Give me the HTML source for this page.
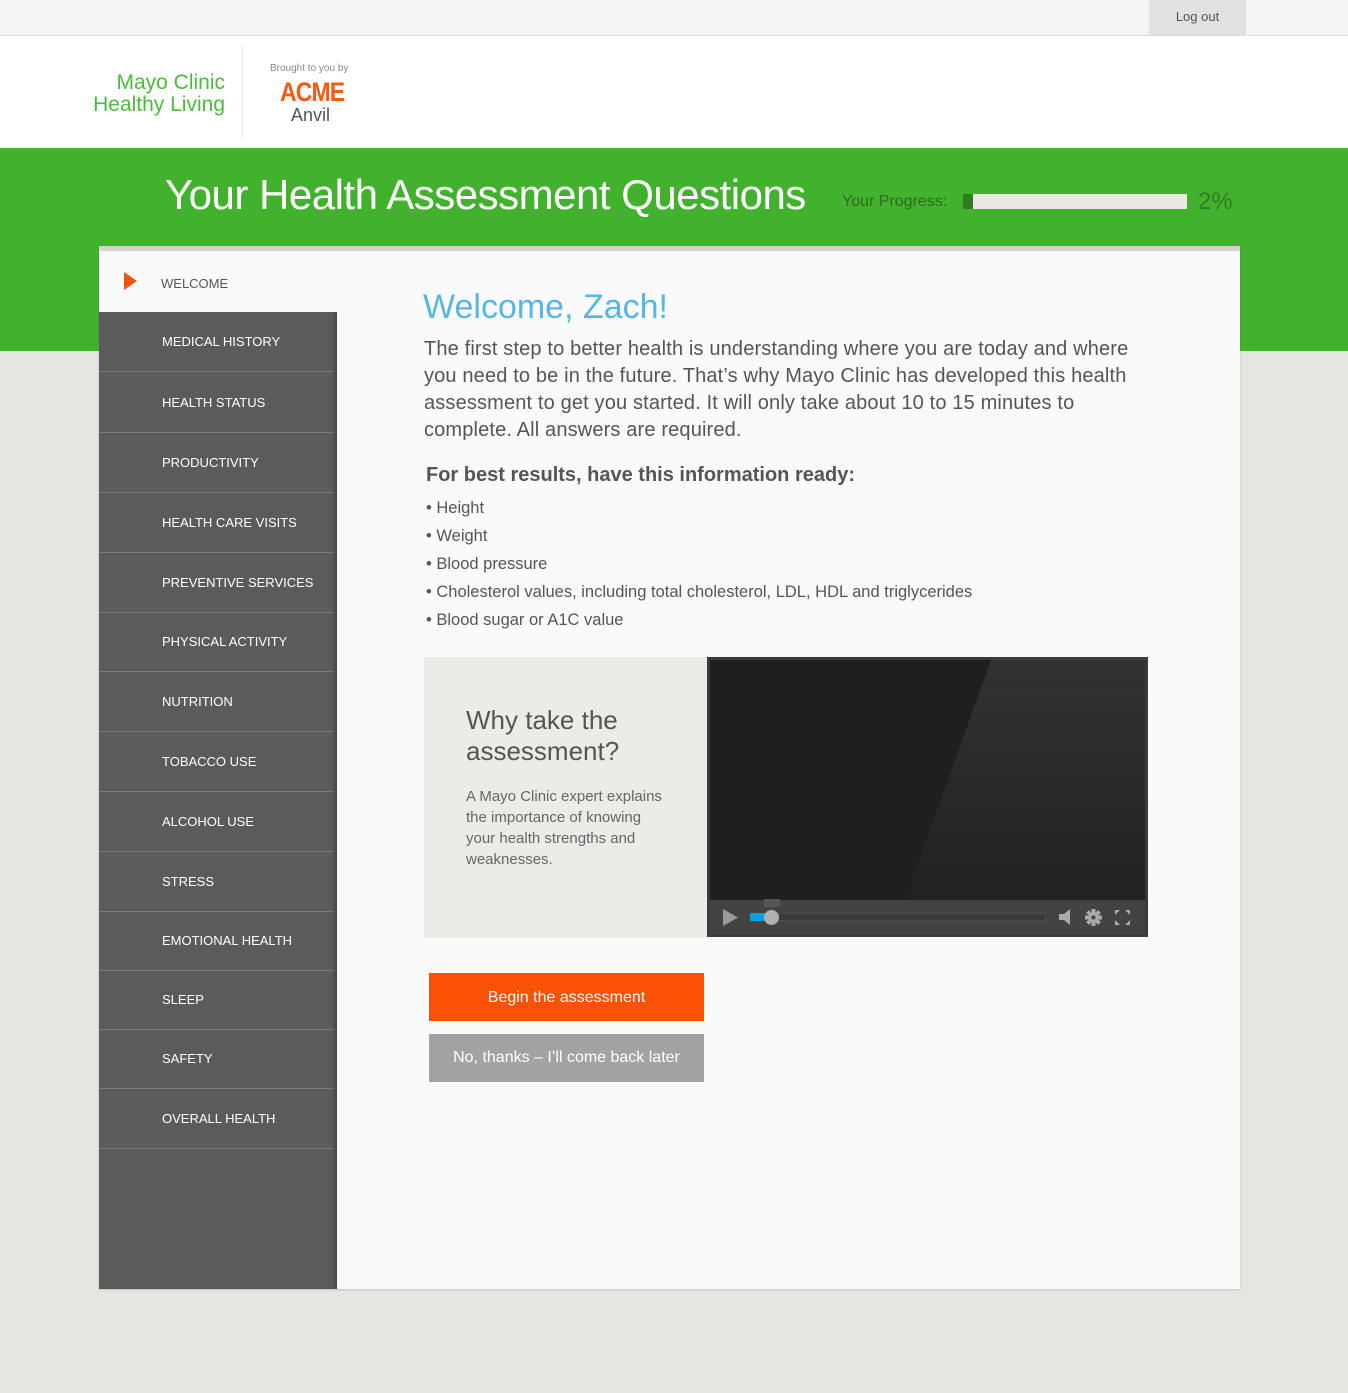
<!DOCTYPE html>
<html><head><meta charset="utf-8"><style>
*{margin:0;padding:0;box-sizing:border-box}
body{width:1348px;height:1393px;background:#e6e5e0;font-family:"Liberation Sans",Arial,sans-serif;position:relative;overflow:hidden}
.a{position:absolute}
.top{left:0;top:0;width:1348px;height:36px;background:#f4f4f2;border-bottom:1px solid #ddd}
.logout{left:1149px;top:0;width:97px;height:35px;background:#e1e1df;font-size:13px;color:#555;text-align:center;line-height:34px}
.hdr{left:0;top:36px;width:1348px;height:112px;background:#fff}
.green{left:0;top:148px;width:1348px;height:203px;background:#42b22e}
.panel{left:99px;top:246px;width:1141px;height:1043px;background:#fafafa;border-top:5px solid #d4d3cc;box-shadow:0 1px 2px rgba(0,0,0,.15)}
.side{left:99px;top:312px;width:238px;height:977px;background:#5b5b5b;box-shadow:inset -4px 0 4px -2px rgba(0,0,0,.25)}
.item{position:absolute;left:0;width:235px;height:60px;border-bottom:1px solid #7a7a7a;color:#fff;font-size:13px;padding-left:63px;display:flex;align-items:center}
.body{color:#555;font-size:20px;line-height:27px;letter-spacing:.15px}
ul li{list-style:none;font-size:16.5px;color:#555;height:28px}
</style></head><body>
<div class="a top"></div><div class="a logout">Log out</div>
<div class="a hdr"></div>
<div class="a" style="left:60px;top:72px;color:#4cbb3c;font-size:21px;line-height:22px;text-align:right;width:165px;white-space:nowrap">Mayo Clinic<br>Healthy Living</div>
<div class="a" style="left:242px;top:46px;width:1px;height:92px;background:#e3e3e3"></div>
<div class="a" style="left:270px;top:63px;font-size:10px;color:#888">Brought to you by</div>
<div class="a" style="left:280px;top:77px;font-size:27px;font-weight:bold;color:#fa5a10;letter-spacing:-1px;transform:scaleX(.85);transform-origin:left">ACME</div>
<div class="a" style="left:291px;top:105px;font-size:18px;color:#555">Anvil</div>
<div class="a green"></div>
<div class="a" style="left:165px;top:171px;font-size:42px;color:#fff;letter-spacing:-.5px">Your Health Assessment Questions</div>
<div class="a" style="left:842px;top:193px;font-size:16px;color:#2b6d1f">Your Progress:</div>
<div class="a" style="left:963px;top:194px;width:224px;height:15px;background:#eae9e5"></div>
<div class="a" style="left:963px;top:194px;width:10px;height:15px;background:#2e7d22"></div>
<div class="a" style="left:1198px;top:188px;font-size:24px;color:#2e7d22">2%</div>
<div class="a panel"></div>
<svg class="a" style="left:124px;top:272px" width="14" height="18"><polygon points="0,0 13,9 0,18" fill="#fa5010"/></svg>
<div class="a" style="left:161px;top:276px;font-size:13px;color:#555">WELCOME</div>
<div class="a side">
<div class="item" style="top:0">MEDICAL HISTORY</div>
<div class="item" style="top:61px">HEALTH STATUS</div>
<div class="item" style="top:121px">PRODUCTIVITY</div>
<div class="item" style="top:181px">HEALTH CARE VISITS</div>
<div class="item" style="top:241px">PREVENTIVE SERVICES</div>
<div class="item" style="top:300px">PHYSICAL ACTIVITY</div>
<div class="item" style="top:360px">NUTRITION</div>
<div class="item" style="top:420px">TOBACCO USE</div>
<div class="item" style="top:480px">ALCOHOL USE</div>
<div class="item" style="top:540px">STRESS</div>
<div class="item" style="top:599px">EMOTIONAL HEALTH</div>
<div class="item" style="top:658px">SLEEP</div>
<div class="item" style="top:717px">SAFETY</div>
<div class="item" style="top:777px">OVERALL HEALTH</div>
</div>
<div class="a" style="left:423px;top:288px;font-size:34px;color:#56b6e6">Welcome, Zach!</div>
<div class="a body" style="left:424px;top:336px;width:740px">The first step to better health is understanding where you are today and where you need to be in the future. That’s why Mayo Clinic has developed this health assessment to get you started. It will only take about 10 to 15 minutes to complete. All answers are required.</div>
<div class="a" style="left:426px;top:464px;font-size:20px;font-weight:bold;color:#555">For best results, have this information ready:</div>
<ul class="a" style="left:426px;top:499px">
<li>• Height</li><li>• Weight</li><li>• Blood pressure</li><li>• Cholesterol values, including total cholesterol, LDL, HDL and triglycerides</li><li>• Blood sugar or A1C value</li></ul>
<div class="a" style="left:424px;top:657px;width:284px;height:281px;background:#ebebe7"></div>
<div class="a" style="left:466px;top:705px;font-size:26px;line-height:31px;color:#555">Why take the<br>assessment?</div>
<div class="a" style="left:466px;top:786px;font-size:15px;line-height:21px;color:#666;width:205px">A Mayo Clinic expert explains the importance of knowing your health strengths and weaknesses.</div>
<div class="a" style="left:707px;top:657px;width:441px;height:280px;background:#3b3b3b"></div>
<svg class="a" style="left:710px;top:660px" width="435" height="240"><defs><linearGradient id="g" x1="0" y1="0" x2="0" y2="1"><stop offset="0" stop-color="#333132"/><stop offset="1" stop-color="#222021"/></linearGradient></defs><rect width="435" height="240" fill="#211e1f"/><polygon points="281,0 435,0 435,240 195,240" fill="url(#g)"/></svg>
<div class="a" style="left:710px;top:900px;width:435px;height:34px;background:#434343"></div>
<svg class="a" style="left:723px;top:909px" width="16" height="17"><polygon points="0,0 15,8.5 0,17" fill="#9a9a9a"/></svg>
<div class="a" style="left:750px;top:913px;width:296px;height:8px;background:#3a3a3a;border:1px solid #4c4c4c"></div>
<div class="a" style="left:750px;top:913px;width:20px;height:8px;background:#0aa0e0"></div>
<div class="a" style="left:764px;top:910px;width:15px;height:15px;border-radius:50%;background:#b0b0b0"></div>
<div class="a" style="left:764px;top:899px;width:16px;height:8px;background:#555"></div>
<svg class="a" style="left:1058px;top:908px" width="18" height="18"><polygon points="1,6 6,6 12,1 12,17 6,12 1,12" fill="#aaa"/></svg>
<svg class="a" style="left:1085px;top:909px" width="17" height="17"><g fill="#aaa" transform="translate(8.5,8.5)"><circle r="5.5"/><rect x="-2" y="-8.5" width="4" height="17"/><rect x="-2" y="-8.5" width="4" height="17" transform="rotate(45)"/><rect x="-2" y="-8.5" width="4" height="17" transform="rotate(90)"/><rect x="-2" y="-8.5" width="4" height="17" transform="rotate(135)"/><circle r="2" fill="#434343"/></g></svg>
<svg class="a" style="left:1115px;top:910px" width="15" height="15" fill="#aaa"><polygon points="0,0 5,0 0,5"/><polygon points="15,0 10,0 15,5"/><polygon points="0,15 5,15 0,10"/><polygon points="15,15 10,15 15,10"/></svg>
<div class="a" style="left:429px;top:973px;width:275px;height:48px;background:#fd5103;color:#fff;font-size:16px;text-align:center;line-height:50px">Begin the assessment</div>
<div class="a" style="left:429px;top:1034px;width:275px;height:48px;background:#a3a3a3;color:#fff;font-size:16px;text-align:center;line-height:48px">No, thanks – I’ll come back later</div>
</body></html>
